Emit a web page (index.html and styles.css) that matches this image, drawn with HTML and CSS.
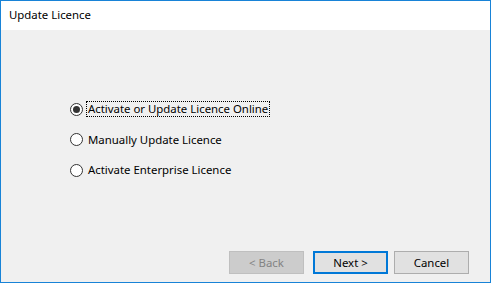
FILE: index.html
```html
<!DOCTYPE html>
<html>
<head>
<meta charset="utf-8">
<link rel="stylesheet" href="styles.css">
</head>
<body>
<div class="window">
  <div class="header">Update Licence</div>
  <div class="content">
    <div class="options">
      <label class="option">
        <span class="radio checked"></span>
        <span class="label focus">Activate or Update Licence Online</span>
      </label>
      <label class="option">
        <span class="radio"></span>
        <span class="label">Manually Update Licence</span>
      </label>
      <label class="option">
        <span class="radio"></span>
        <span class="label">Activate Enterprise Licence</span>
      </label>
    </div>
    <div class="buttons">
      <button class="btn disabled">&lt; Back</button>
      <button class="btn primary">Next &gt;</button>
      <button class="btn cancel">Cancel</button>
    </div>
  </div>
</div>
</body>
</html>
```
FILE: styles.css
```css
* { box-sizing: border-box; }
html, body { margin: 0; padding: 0; }
body {
  font-family: "Noto Sans", "Open Sans", sans-serif;
  font-size: 11.4px;
  color: #000;
  background: #f0f0f0;
}
.window {
  width: 491px;
  height: 283px;
  border: 1px solid #1883d7;
  display: flex;
  flex-direction: column;
  background: #f0f0f0;
}
.header {
  height: 29px;
  background: #fff;
  padding: 6px 0 0 8px;
  line-height: 16px;
  flex: none;
}
.content {
  flex: 1;
  display: flex;
  flex-direction: column;
  justify-content: space-between;
  padding: 71px 0 8px 69px;
}
.options {
  display: flex;
  flex-direction: column;
  gap: 14.5px;
}
.option {
  display: flex;
  align-items: center;
  height: 16px;
}
.radio {
  width: 13px;
  height: 13px;
  border: 1px solid #333;
  border-radius: 50%;
  background: #fff;
  position: relative;
  flex: none;
  margin-right: 3px;
}
.radio.checked::after {
  content: "";
  position: absolute;
  left: 2px;
  top: 2px;
  width: 7px;
  height: 7px;
  border-radius: 50%;
  background: #333;
}
.label {
  padding: 0 1px;
  line-height: 14px;
  border: 1px solid transparent;
}
.label.focus {
  border: 1px dotted #000;
}
.buttons {
  display: flex;
  justify-content: flex-end;
  padding-right: 21px;
}
.btn {
  width: 75px;
  height: 23px;
  font-family: inherit;
  font-size: 11.4px;
  padding: 0;
  border: 1px solid #adadad;
  background: #e1e1e1;
  color: #000;
}
.btn.disabled {
  background: #cccccc;
  border-color: #bfbfbf;
  color: #838383;
  margin-right: 9px;
}
.btn.primary {
  border: 2px solid #0078d7;
  margin-right: 6px;
}
```
